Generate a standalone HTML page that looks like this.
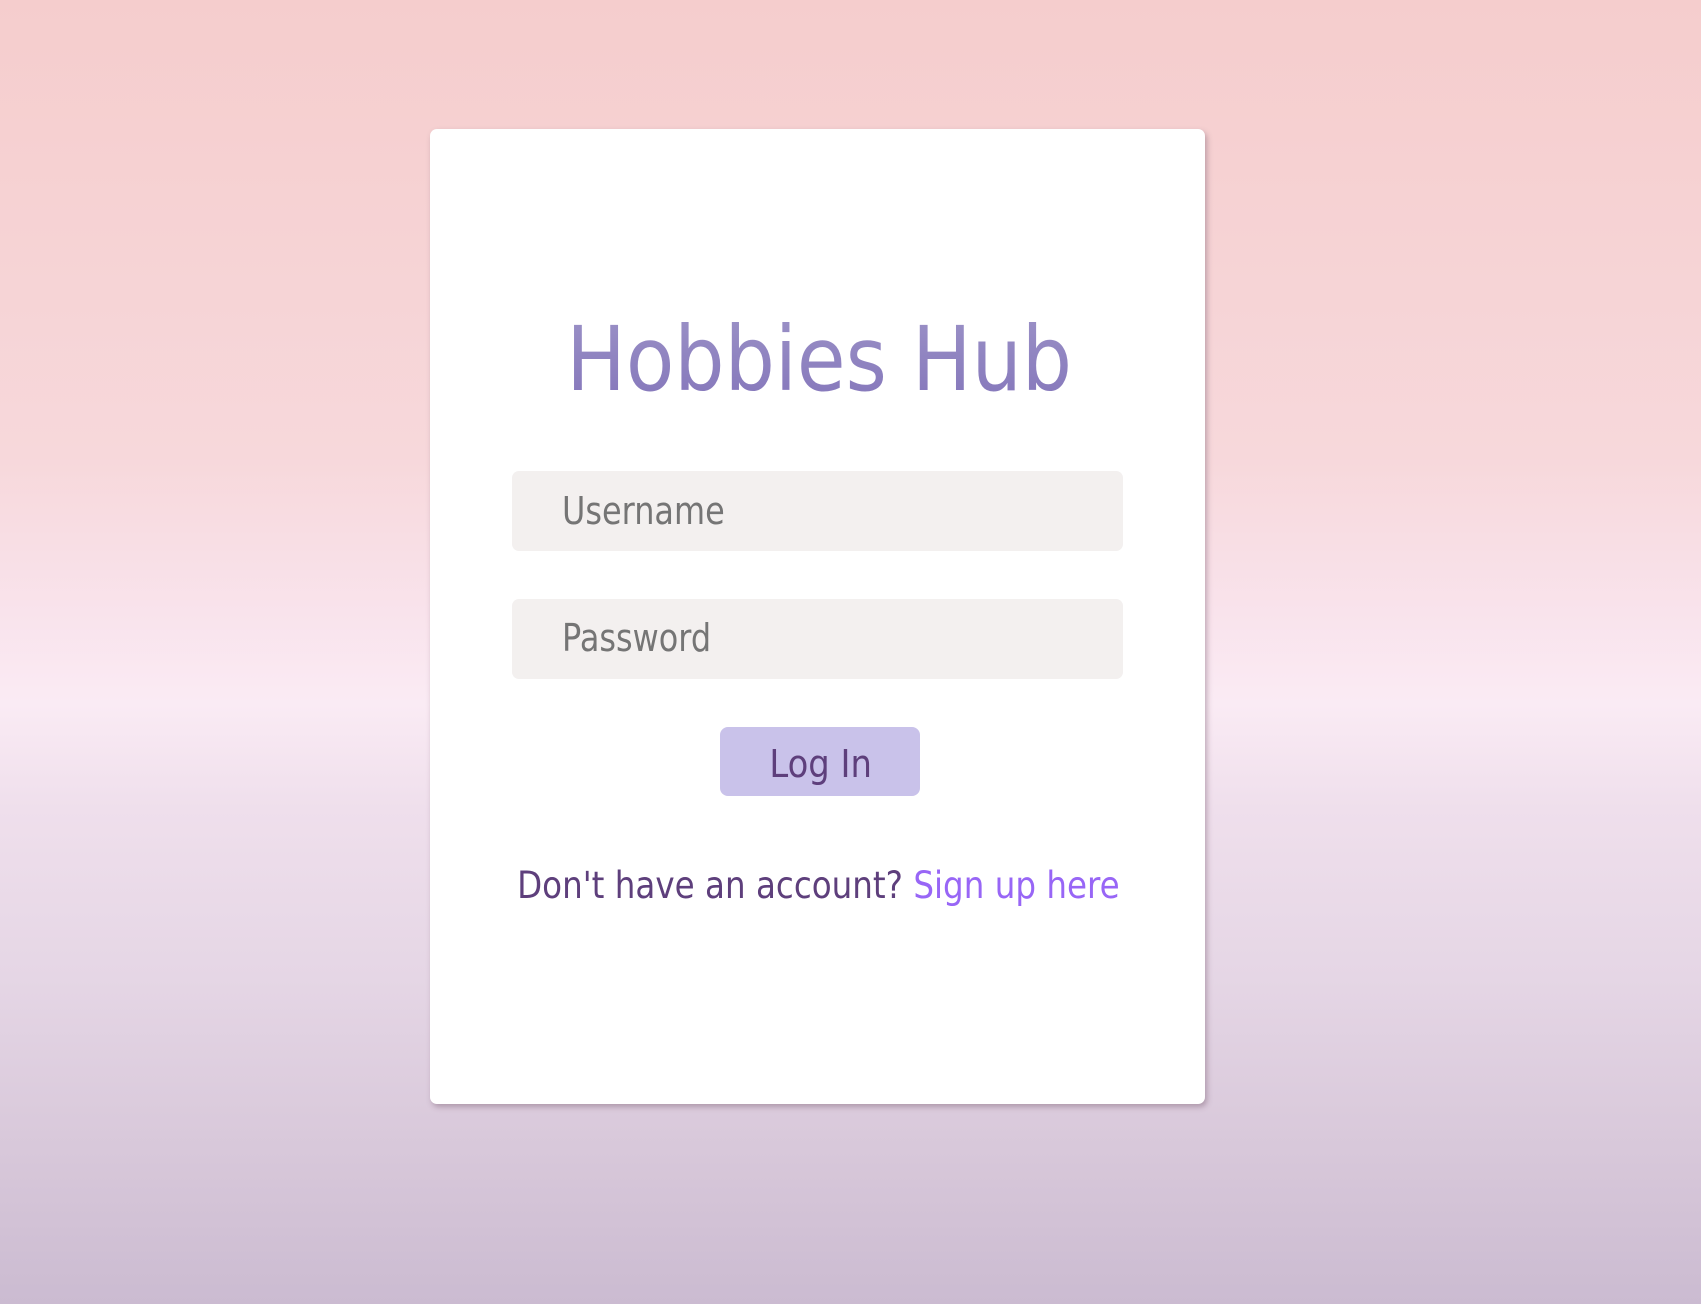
<!DOCTYPE html>
<html><head><meta charset="utf-8"><style>
html,body{margin:0;padding:0}
body{width:1701px;height:1304px;position:relative;overflow:hidden;font-family:"DejaVu Sans","Liberation Sans",sans-serif;
background:linear-gradient(to bottom,#f5cdcd 0%,#f7d8db 35%,#f9e3ec 47%,#faebf4 54%,#efdfec 62%,#e5d6e5 75%,#d8c8da 88%,#cbbbd1 100%);}
.card{position:absolute;left:430px;top:129px;width:775px;height:975px;background:#fff;border-radius:7px;box-shadow:2px 3px 6px rgba(120,90,110,.45);}
.t{position:absolute;left:430px;width:775px;text-align:center;line-height:1;white-space:nowrap}
.t span{display:inline-block;transform:scaleX(.88);transform-origin:center}
.inp{position:absolute;left:512px;width:611px;height:80px;background:#f3f0ef;border-radius:7px}
.ph{position:absolute;left:562px;font-size:38px;line-height:1;color:#757575;white-space:nowrap;transform:scaleX(.84);transform-origin:left}
.btn{position:absolute;left:720px;top:727px;width:200px;height:69px;background:#c9c2ea;border-radius:8px}
</style></head><body>
<div class="card"></div>
<div class="t" style="top:315px;font-size:89px;left:432px"><span style="background:linear-gradient(#9a90c6,#8577bb);-webkit-background-clip:text;color:transparent;transform:scaleX(.89)">Hobbies Hub</span></div>
<div class="inp" style="top:471px"></div>
<div class="ph" style="top:492px">Username</div>
<div class="inp" style="top:599px"></div>
<div class="ph" style="top:619px">Password</div>
<div class="btn"></div>
<div class="t" style="top:745px;font-size:38px;color:#5e3f7c;left:433px"><span style="transform:scaleX(.89)">Log In</span></div>
<div class="t" style="top:867px;font-size:37px;color:#5e3f7c;left:431px"><span>Don't have an account? <span style="color:#9866f6;transform:none">Sign up here</span></span></div>
</body></html>
